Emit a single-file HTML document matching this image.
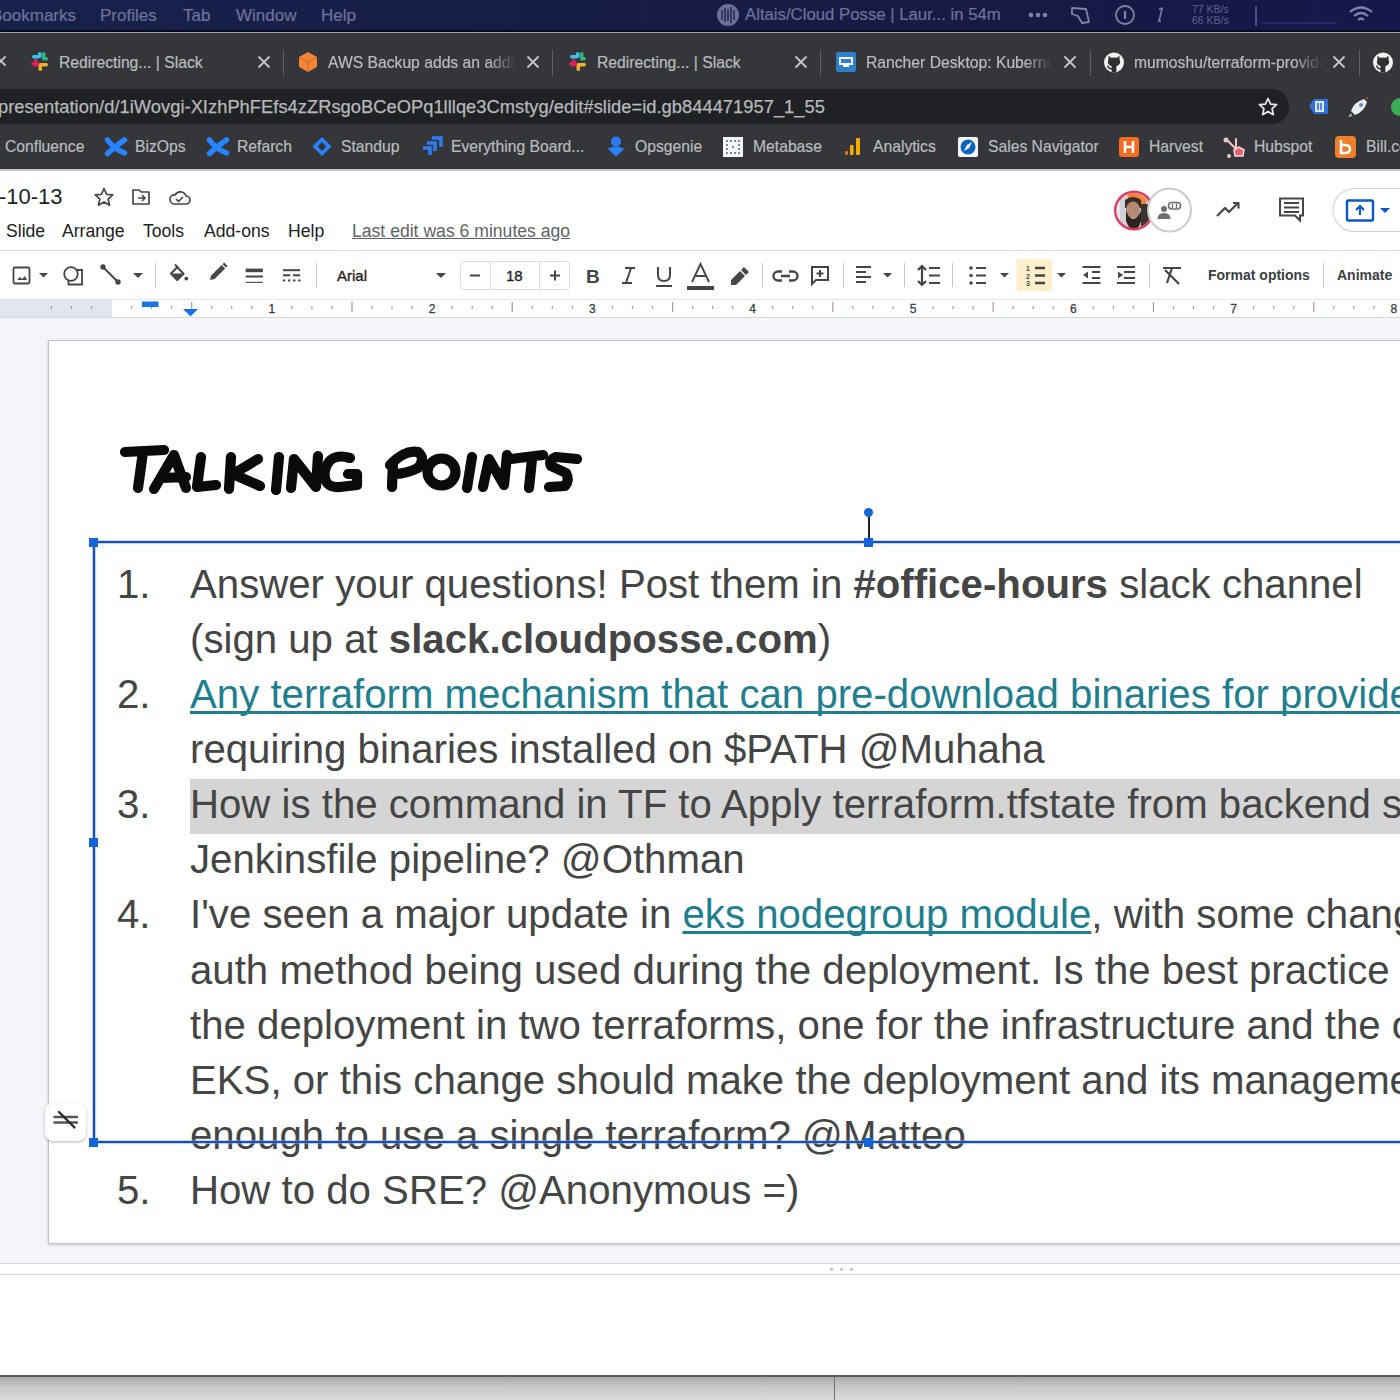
<!DOCTYPE html>
<html><head><meta charset="utf-8">
<style>
*{box-sizing:border-box;margin:0;padding:0}
html,body{width:1400px;height:1400px;overflow:hidden;background:#fff;font-family:"Liberation Sans",sans-serif}
.a{position:absolute}
.t{position:absolute;white-space:nowrap;line-height:1}
svg{position:absolute;overflow:visible}
/* mac menu bar */
#menubar{left:0;top:0;width:1400px;height:31px;background:linear-gradient(90deg,#17224a 0%,#161d45 40%,#181a42 70%,#15184a 100%)}
#menubar .t{color:#6d7399;font-size:17px;top:7px;-webkit-text-stroke:0.2px #6d7399}
/* chrome */
#tabstrip{left:0;top:33px;width:1400px;height:56px;background:#35363a}
#tabstrip .t{color:#c4c6ca;font-size:15.6px;top:55px}
.tsep{position:absolute;top:50px;width:1px;height:26px;background:#5f6063}
#addrrow{left:0;top:88px;width:1400px;height:37px;background:#35363a}
#addr{left:-30px;top:89px;width:1319px;height:35px;background:#202124;border-radius:17px}
#bmbar{left:0;top:125px;width:1400px;height:45px;background:#35363a}
#bmbar .t,.bm{color:#b9bcc0;font-size:15.7px;-webkit-text-stroke:0.2px #b9bcc0}
/* slides header */
#hdrline{left:0;top:250px;width:1400px;height:1px;background:#dadce0}
.menu{color:#202124;font-size:17.6px;top:223px}
/* toolbar */
.sep{position:absolute;top:263px;width:1px;height:24px;background:#c7c7c7}
/* ruler */
#ruler{left:0;top:300px;width:1400px;height:18px;background:#fff;border-bottom:1px solid #d5d8dd}
#canvas{left:0;top:318px;width:1400px;height:945px;background:#f3f5f9}
#slide{left:48px;top:340px;width:1400px;height:904px;background:#fff;border:1px solid #c4c4c4;box-shadow:0 1px 3px rgba(0,0,0,.18)}
.li{position:absolute;left:0;font-size:40.2px;line-height:55px;color:#454545;white-space:nowrap}
.num{position:absolute;left:117px;font-size:40.2px;line-height:55px;color:#454545}
.lk{color:#207f8e;text-decoration:underline;text-decoration-thickness:2.6px;text-underline-offset:3px;text-decoration-skip-ink:none}
</style></head><body>

<div id="menubar" class="a">
  <div class="t" style="left:-9px">Bookmarks</div>
  <div class="t" style="left:100px">Profiles</div>
  <div class="t" style="left:183px">Tab</div>
  <div class="t" style="left:236px">Window</div>
  <div class="t" style="left:321px">Help</div>
  <div class="t" style="left:745px;font-size:16.75px">Altais/Cloud Posse | Laur... in 54m</div>
</div>
<div class="a" style="left:0;top:30px;width:1400px;height:2px;background:#060a1e"></div>
<div class="a" style="left:0;top:32px;width:1400px;height:1px;background:#9d9ea3"></div>

<div id="tabstrip" class="a"></div>
<div id="addrrow" class="a"></div>
<div id="addr" class="a"></div>
<div id="bmbar" class="a"></div>
<div class="a" style="left:0;top:169px;width:1400px;height:2px;background:#c9c9c9"></div>


<!-- menubar icons -->
<svg class="a" style="left:0;top:0" width="1400" height="32">
<g fill="none" stroke="#7d84a8" stroke-width="1.8">
<circle cx="728" cy="15" r="11" fill="#6b7197" stroke="none"/>
<path d="M722,10 v10 M725,8 v14 M728,9 v12 M731,7 v16 M734,10 v10" stroke="#1b2150" stroke-width="1.4"/>
<circle cx="1031" cy="15" r="2.3" fill="#7d84a8" stroke="none"/><circle cx="1038" cy="15" r="2.3" fill="#7d84a8" stroke="none"/><circle cx="1045" cy="15" r="2.3" fill="#7d84a8" stroke="none"/>
<path d="M1072,8 L1086,9 L1089,22 L1082,23 L1078,16 L1072,14 Z" stroke-linejoin="round"/>
<circle cx="1125" cy="15" r="9"/><path d="M1125,11 v8" stroke-width="2.2"/>
<path d="M1162,9 l-3,12 M1159,9 l4,-1 M1158,21 l3,0" stroke-width="1.5"/>
<path d="M1350,12 Q1361,3 1372,12 M1354,16 Q1361,10 1368,16 M1358,20 Q1361,17 1364,20" stroke-width="2.2"/>
</g>
<text x="1192" y="13" font-size="10.5" fill="#5d6388" font-family="Liberation Sans">77 KB/s</text>
<text x="1192" y="24" font-size="10.5" fill="#5d6388" font-family="Liberation Sans">66 KB/s</text>
<path d="M1256,6 v20" stroke="#4a5080" stroke-width="2" fill="none"/>
<path d="M1262,23 h75" stroke="#2c3e8a" stroke-width="1.5" fill="none" opacity=".7"/>
</svg>

<!-- tabs -->
<div class="t bm" style="left:59px;top:55px">Redirecting... | Slack</div>
<div class="t bm" style="left:328px;top:55px;width:188px;overflow:hidden;-webkit-mask-image:linear-gradient(90deg,#000 85%,transparent)">AWS Backup adds an additional</div>
<div class="t bm" style="left:597px;top:55px">Redirecting... | Slack</div>
<div class="t bm" style="left:866px;top:55px;width:186px;overflow:hidden;-webkit-mask-image:linear-gradient(90deg,#000 85%,transparent)">Rancher Desktop: Kubernetes</div>
<div class="t bm" style="left:1134px;top:55px;width:188px;overflow:hidden;-webkit-mask-image:linear-gradient(90deg,#000 85%,transparent)">mumoshu/terraform-provider</div>
<div class="tsep" style="left:283px"></div><div class="tsep" style="left:552px"></div><div class="tsep" style="left:820px"></div><div class="tsep" style="left:1090px"></div><div class="tsep" style="left:1359px"></div>
<svg class="a" style="left:0;top:0" width="1400" height="170">
<g stroke="#c4c6ca" stroke-width="1.8" stroke-linecap="round">
<path d="M259,57 l10,10 M269,57 l-10,10"/>
<path d="M528,57 l10,10 M538,57 l-10,10"/>
<path d="M796,57 l10,10 M806,57 l-10,10"/>
<path d="M1065,57 l10,10 M1075,57 l-10,10"/>
<path d="M1334,57 l10,10 M1344,57 l-10,10"/>
<path d="M-3,57 l8,8 M5,57 l-8,8"/>
</g>
<!-- slack icons -->
<g id="slk">
<rect x="32" y="55" width="8" height="3.5" rx="1.7" fill="#36c5f0"/><rect x="38" y="52" width="3.5" height="6" rx="1.7" fill="#36c5f0"/>
<rect x="42" y="52" width="3.5" height="8" rx="1.7" fill="#2eb67d"/><rect x="42" y="57" width="6" height="3.5" rx="1.7" fill="#2eb67d"/>
<rect x="40" y="63" width="8" height="3.5" rx="1.7" fill="#ecb22e"/><rect x="38.5" y="63" width="3.5" height="8" rx="1.7" fill="#ecb22e"/>
<rect x="34" y="59" width="3.5" height="8" rx="1.7" fill="#e01e5a"/><rect x="31" y="62" width="8" height="3.5" rx="1.7" fill="#e01e5a"/>
</g>
<use href="#slk" x="538"/>
<!-- aws cube -->
<path d="M308,52 l9,5 v10 l-9,5 l-9,-5 v-10 z" fill="#f58536"/><path d="M299,57 l9,5 l9,-5 M308,62 v10" stroke="#c8621e" stroke-width="1" fill="none"/>
<!-- rancher -->
<rect x="836" y="52" width="20" height="20" rx="2" fill="#2f7fcf"/><path d="M840,58 h12 v6 h-12 z M843,66 h6" stroke="#fff" stroke-width="1.8" fill="none"/>
<!-- github -->
<g id="gh"><defs><clipPath id="ghc"><circle cx="1114" cy="62.5" r="10"/></clipPath></defs><circle cx="1114" cy="62.5" r="10" fill="#f4f4f6"/><g clip-path="url(#ghc)" fill="#2e2f33"><ellipse cx="1114" cy="62" rx="6.2" ry="4.6"/><path d="M1108.3,60 l0.3,-4.2 3,2.4 z M1119.7,60 l-0.3,-4.2 -3,2.4 z"/><rect x="1111.6" y="64" width="4.8" height="12"/><path d="M1107.5,65.5 q1,3.5 4.5,3.5" fill="none" stroke="#2e2f33" stroke-width="1.3"/></g></g>
<use href="#gh" x="269"/>
<!-- address star & extensions -->
<path d="M1268,98.5 l2.6,5.6 6,0.6 -4.5,4 1.3,6 -5.4,-3.1 -5.4,3.1 1.3,-6 -4.5,-4 6,-0.6 z" fill="none" stroke="#e8eaed" stroke-width="1.7" stroke-linejoin="round"/>
<path d="M1309,106 l5,-7 h14 v15 h-14 z" fill="#2f6fd6"/><rect x="1315" y="101" width="9" height="11" fill="#dbe8ff"/><path d="M1318,103 v7 M1321,103 v7" stroke="#2f6fd6" stroke-width="1.6"/>
<path d="M1364,99 q-10,3 -13,12 l4,4 q9,-3 12,-13 z" fill="#eceff1"/><circle cx="1361" cy="105" r="2" fill="#5b8bd0"/><path d="M1351,113 l-3,4 4,-1 z" fill="#c8c090"/><path d="M1366,98 l2,-1 -1,3 z" fill="#e55"/>
<circle cx="1400" cy="107" r="9" fill="#3cae5a"/>
</svg>
<div class="t" style="left:-2px;top:98px;font-size:18.3px;letter-spacing:0.04px;color:#b6b8bc;-webkit-text-stroke:0.25px #b6b8bc">presentation/d/1iWovgi-XIzhPhFEfs4zZRsgoBCeOPq1lllqe3Cmstyg/edit#slide=id.gb844471957_1_55</div>


<!-- bookmarks -->
<div class="t bm" style="left:5px;top:139px">Confluence</div>
<div class="t bm" style="left:135px;top:139px">BizOps</div>
<div class="t bm" style="left:237px;top:139px">Refarch</div>
<div class="t bm" style="left:341px;top:139px">Standup</div>
<div class="t bm" style="left:451px;top:139px">Everything Board...</div>
<div class="t bm" style="left:635px;top:139px">Opsgenie</div>
<div class="t bm" style="left:753px;top:139px">Metabase</div>
<div class="t bm" style="left:873px;top:139px">Analytics</div>
<div class="t bm" style="left:988px;top:139px">Sales Navigator</div>
<div class="t bm" style="left:1149px;top:139px">Harvest</div>
<div class="t bm" style="left:1254px;top:139px">Hubspot</div>
<div class="t bm" style="left:1366px;top:139px">Bill.com</div>
<svg class="a" style="left:0;top:0" width="1400" height="170">
<g id="conf" fill="none" stroke="#2684ff" stroke-width="5.5" stroke-linecap="round"><path d="M107.5,140 Q114,149 124.5,153"/><path d="M107.5,153.5 Q117,145 124.5,140"/></g>
<use href="#conf" x="102"/>
<path d="M322,137 l9.5,9.5 -9.5,9.5 -9.5,-9.5 z" fill="#2684ff"/><path d="M322,142 l4.5,4.5 -4.5,4.5 -4.5,-4.5 z" fill="#35363a"/>
<path d="M423,148 h7 v7 M427,143 h8 v8 M432,138 h9 v9" fill="none" stroke="#2f7cf0" stroke-width="3.6" stroke-linejoin="miter"/>
<circle cx="616" cy="141.5" r="5" fill="#2c7cf6"/><path d="M607.5,148.5 L616,146 L624.5,148.5 L616,156.5 z" fill="#2684ff"/>
<rect x="723" y="137" width="20" height="20" fill="#f4f6fb"/>
<g fill="#55657a"><circle cx="727" cy="141" r="1"/><circle cx="731" cy="141" r="1"/><circle cx="735" cy="141" r="1"/><circle cx="739" cy="141" r="1"/><circle cx="727" cy="145" r="1"/><circle cx="733" cy="147" r="1"/><circle cx="739" cy="145" r="1"/><circle cx="727" cy="149" r="1"/><circle cx="739" cy="149" r="1"/><circle cx="727" cy="153" r="1"/><circle cx="731" cy="153" r="1"/><circle cx="735" cy="153" r="1"/><circle cx="739" cy="153" r="1"/></g>
<rect x="845" y="151" width="3" height="4" rx="1" fill="#e8710a"/><rect x="850" y="145" width="3.5" height="10" rx="1" fill="#f9ab00"/><rect x="856" y="138" width="4" height="17" rx="1" fill="#f9ab00"/>
<rect x="958" y="137" width="20" height="20" rx="2" fill="#f3f6fa"/><circle cx="968" cy="147" r="7.5" fill="#0a66c2"/><path d="M972,142 l-3,6 -5,3 3,-6 z" fill="#fff"/>
<rect x="1119" y="137" width="20" height="20" rx="3" fill="#f36c21"/><path d="M1125,141 v12 M1133,141 v12 M1125,147 h8" stroke="#fff" stroke-width="2.5"/>
<path d="M1227,140 l10,10 M1236,139 v8" stroke="#f7c2c2" stroke-width="2" stroke-linecap="round"/><circle cx="1226" cy="140" r="2.5" fill="#f6c6c6"/><circle cx="1229" cy="156" r="2" fill="#f6c6c6"/><path d="M1234,150 l5,-3 5,3 -1,6 h-8 z" fill="#e8606a" stroke="#fbdcdc" stroke-width="1.5"/>
<rect x="1335" y="136" width="21" height="22" rx="4" fill="#ef7f2a"/><path d="M1341,140 v13 h4 q5,0 5,-4 q0,-4 -5,-4 h-4" stroke="#fff" stroke-width="2.6" fill="none"/>

</svg>


<!-- doc header -->
<div class="t" style="left:-1px;top:186px;font-size:22px;color:#1f1f1f">-10-13</div>
<div class="t menu" style="left:6px">Slide</div>
<div class="t menu" style="left:62px">Arrange</div>
<div class="t menu" style="left:143px">Tools</div>
<div class="t menu" style="left:204px">Add-ons</div>
<div class="t menu" style="left:288px">Help</div>
<div class="t menu" style="left:352px;color:#5f6368;text-decoration:underline;font-size:17.6px">Last edit was 6 minutes ago</div>
<svg class="a" style="left:0;top:0" width="1400" height="320">
<g fill="none" stroke="#444746" stroke-width="1.7" stroke-linejoin="round">
<path d="M104,188.5 l2.6,5.8 6.2,0.6 -4.7,4.2 1.4,6.1 -5.5,-3.2 -5.5,3.2 1.4,-6.1 -4.7,-4.2 6.2,-0.6 z"/>
<path d="M133,190 h6 l2,2 h8 v12 h-16 z M138,198 h7 M142,195 l3,3 -3,3"/>
<path d="M174,204 h12 a4,4 0 0 0 0,-8 a6,6 0 0 0 -11,-1 a4.5,4.5 0 0 0 -1,9 z M176,199 l2.5,2.5 4.5,-4.5"/>
</g>
<!-- right header icons -->
<defs><clipPath id="av"><circle cx="1134" cy="210.5" r="17.5"/></clipPath></defs>
<circle cx="1134" cy="210.5" r="20" fill="#e23a64"/>
<g clip-path="url(#av)">
<rect x="1110" y="190" width="50" height="42" fill="#cfd2d4"/>
<rect x="1110" y="190" width="10" height="42" fill="#e8eaec"/>
<path d="M1127,194 q12,-4 20,6 l-2,8 q-6,-8 -16,-8 z" fill="#f0883a"/>
<path d="M1125,200 q8,-6 16,0 v8 h-16 z" fill="#3a2c26"/>
<ellipse cx="1133" cy="210" rx="7" ry="8.5" fill="#b48a72"/>
<path d="M1126,211 q7,16 15,0 v10 q-2,8 -7,10 q-5,-2 -8,-10 z" fill="#2c2320"/>
<rect x="1141" y="204" width="12" height="28" fill="#3b3330"/>
<path d="M1118,227 q14,8 30,-2 v10 h-30 z" fill="#e26a2c"/>
</g>
<circle cx="1169.5" cy="210" r="21.5" fill="#fff" stroke="#cbcbcb" stroke-width="2"/>
<circle cx="1164" cy="209" r="3" fill="#6f6f6f"/><path d="M1157.5,219 q0,-6 6.5,-6 q6.5,0 6.5,6 z" fill="#6f6f6f"/>
<rect x="1168.5" y="202.5" width="12" height="6.5" rx="3.2" fill="#fff" stroke="#6f6f6f" stroke-width="1.6"/><path d="M1172.5,203.5 v4.5 M1176.5,203.5 v4.5" stroke="#6f6f6f" stroke-width="1.3"/>
<path d="M1217,216 l8,-8 4,4 9,-9 M1233,203 h5.5 v5.5" fill="none" stroke="#444746" stroke-width="2.2" stroke-linejoin="round"/>
<path d="M1280,198.5 h23 v17 h-3 v5 l-5,-5 h-15 z M1284,203 h15 M1284,207.5 h15 M1284,212 h15" fill="none" stroke="#444746" stroke-width="2"/>
<rect x="1333" y="188.5" width="90" height="43" rx="21.5" fill="#fff" stroke="#d6d6d6" stroke-width="1.2"/>
<rect x="1347" y="200.5" width="26" height="20" rx="1.5" fill="none" stroke="#0b57d0" stroke-width="2.4"/>
<path d="M1360,215 v-8 M1356,210 l4,-4 4,4" stroke="#0b57d0" stroke-width="2.2" fill="none"/>
<path d="M1380,208 h10 l-5,5 z" fill="#0b57d0"/>
</svg>

<!-- toolbar -->
<svg class="a" style="left:0;top:0" width="1400" height="320">
<g fill="none" stroke="#444746" stroke-width="1.8">
<rect x="13.5" y="267.5" width="16" height="16" rx="1.5"/>
<path d="M17,280 l3,-3 2,2 3,-3 2,4 z" fill="#444746" stroke="none"/>
<circle cx="71" cy="274" r="6.8"/><path d="M77,270 h5 v14.5 h-13.5 v-3.5"/>
<path d="M103,267 l15,15" stroke-width="2"/><circle cx="103" cy="267" r="1.8" fill="#444746"/><circle cx="118" cy="282" r="1.8" fill="#444746"/>
<path d="M175,264.5 l3.5,3.5" stroke-width="2"/>
<path d="M171,273.5 L177.2,267.3 L183.6,273.7 L177.2,280 Z" stroke-width="2" stroke-linejoin="round"/>
<path d="M172,273.5 L183,273.5 L177.2,279.5 Z" fill="#444746" stroke="none"/>
<circle cx="186.3" cy="278.6" r="1.9" fill="#444746" stroke="none"/>
<path d="M210,280 l1.2,-4.5 10.5,-10.5 3.4,3.4 -10.5,10.5 z" fill="#444746" stroke="none"/>
<path d="M222.5,264.2 l1.6,-1.6 3.4,3.4 -1.6,1.6 z" fill="#444746" stroke="none"/>
<rect x="245.7" y="268.6" width="17.2" height="3.6" fill="#444746" stroke="none"/>
<rect x="245.7" y="275.5" width="17.2" height="2" fill="#444746" stroke="none"/>
<rect x="245.7" y="281.8" width="17.2" height="1.1" fill="#444746" stroke="none"/>
<rect x="283" y="269.2" width="17" height="2" fill="#444746" stroke="none"/>
<rect x="283" y="274.3" width="7.3" height="2" fill="#444746" stroke="none"/><rect x="293" y="274.3" width="7" height="2" fill="#444746" stroke="none"/>
<circle cx="284" cy="280.4" r="1.2" fill="#444746" stroke="none"/><circle cx="289.1" cy="280.4" r="1.2" fill="#444746" stroke="none"/><circle cx="294.3" cy="280.4" r="1.2" fill="#444746" stroke="none"/><circle cx="299.4" cy="280.4" r="1.2" fill="#444746" stroke="none"/>
</g>
<g fill="#444746">
<path d="M39,273 h9 l-4.5,4.5 z"/><path d="M133,273 h10 l-5,5 z"/><path d="M436,273 h10 l-5,5 z"/>
<path d="M883,273 h9 l-4.5,4.5 z"/><path d="M1000,273 h9 l-4.5,4.5 z"/><path d="M1057,273 h9 l-4.5,4.5 z"/>
</g>
<rect x="460.5" y="261.5" width="109" height="28" rx="3" fill="#fff" stroke="#dadce0"/>
<path d="M490.5,262 v27 M539.5,262 v27" stroke="#dadce0"/>
<path d="M470,275.5 h10" stroke="#444746" stroke-width="2"/><path d="M550,275.5 h10 M555,270.5 v10" stroke="#444746" stroke-width="2"/>
<text x="586" y="283" font-size="19" font-weight="700" fill="#444746" font-family="Liberation Sans">B</text>
<path d="M625,268 h10 M622,283 h10 M631,268 l-5,15" stroke="#444746" stroke-width="2" fill="none"/>
<path d="M658,267 v8 q0,6 6,6 q6,0 6,-6 v-8 M656,286 h16" stroke="#444746" stroke-width="2" fill="none"/>
<path d="M692,282 l8.5,-18 8.5,18 M695,276 h11" stroke="#444746" stroke-width="1.9" fill="none"/><rect x="687" y="286" width="27" height="4" fill="#444746"/>
<path d="M731,280 l9,-9 5,5 -9,9 h-5 z M741,270 l3,-3 5,5 -3,3 z" fill="#444746"/>
<g fill="none" stroke="#444746" stroke-width="2">
<path d="M782,271.5 h-4 a4.5,4.5 0 0 0 0,9 h4 M789,271.5 h4 a4.5,4.5 0 0 1 0,9 h-4 M781,276 h9" stroke-width="2.4"/>
<path d="M812,267 h16 v13 h-12 l-4,4 z M820,270 v7 M816.5,273.5 h7"/>
<path d="M856,267 h15 M856,272 h10 M856,277 h15 M856,282 h10" stroke-width="2.2"/>
<path d="M922,266 v19 M918,270 l4,-4 4,4 M918,281 l4,4 4,-4 M929,268 h11 M929,275.5 h11 M929,283 h11" stroke-width="2.2"/>
<path d="M976,268 h10 M976,275.5 h10 M976,283 h10" stroke-width="2.2"/>
<path d="M1090,267 h10 M1090,283 h10 M1092,272 h8 M1092,278 h8 M1083,267 v0" stroke-width="2"/>
<path d="M1117,267 h18 M1117,283 h18 M1124,272 h11 M1124,278 h11" stroke-width="2"/>
<path d="M1163,268 h18 M1172,268 l-5,15 M1165,270 l14,14" stroke-width="2.2"/>
</g>
<g fill="#444746"><circle cx="971" cy="268" r="1.8"/><circle cx="971" cy="275.5" r="1.8"/><circle cx="971" cy="283" r="1.8"/>
<path d="M1083,275 l5,-3.5 v7 z"/><path d="M1118,271.5 l5,3.5 -5,3.5 z"/></g>
<path d="M1082.5,267 h18 M1082.5,283 h18" stroke="#444746" stroke-width="2"/>
<rect x="1016.5" y="259" width="35.5" height="32" rx="2" fill="#fce8b2" fill-opacity=".7"/>
<path d="M1035,268 h10 M1035,275.5 h10 M1035,283 h10" stroke="#444746" stroke-width="2.4"/>
<text x="1026" y="271" font-size="7" fill="#444746" font-family="Liberation Sans" font-weight="700">1</text>
<text x="1026" y="278.5" font-size="7" fill="#444746" font-family="Liberation Sans" font-weight="700">2</text>
<text x="1026" y="286" font-size="7" fill="#444746" font-family="Liberation Sans" font-weight="700">3</text>
</svg>
<div class="sep" style="left:155px"></div><div class="sep" style="left:316px"></div><div class="sep" style="left:762px"></div><div class="sep" style="left:843px"></div><div class="sep" style="left:904px"></div><div class="sep" style="left:952px"></div><div class="sep" style="left:1149px"></div><div class="sep" style="left:1323px"></div>
<div class="t" style="left:337px;top:268px;font-size:15px;color:#1f1f1f;-webkit-text-stroke:0.35px #1f1f1f">Arial</div>
<div class="t" style="left:506px;top:268px;font-size:15px;color:#1f1f1f;-webkit-text-stroke:0.35px #1f1f1f">18</div>
<div class="t" style="left:1208px;top:268px;font-size:14px;font-weight:700;color:#3c4043">Format options</div>
<div class="t" style="left:1337px;top:268px;font-size:14px;font-weight:700;color:#3c4043">Animate</div>

<div id="hdrline" class="a"></div>
<div id="ruler" class="a"></div>
<div class="a" style="left:0;top:300px;width:112px;height:17px;background:#e3e6ec"></div>
<div id="canvas" class="a"></div>
<svg class="a" style="left:0;top:0" width="1400" height="320">
<rect x="0" y="299" width="1400" height="1" fill="#e6e6e6"/>


<rect x="50.8" y="306" width="1.2" height="3" fill="#9aa0a6"/>
<rect x="70.8" y="306" width="1.2" height="3" fill="#9aa0a6"/>
<rect x="90.9" y="306" width="1.2" height="3" fill="#9aa0a6"/>
<rect x="130.9" y="306" width="1.2" height="3" fill="#9aa0a6"/>
<rect x="151.0" y="306" width="1.2" height="3" fill="#9aa0a6"/>
<rect x="171.0" y="306" width="1.2" height="3" fill="#9aa0a6"/>
<rect x="191.1" y="302" width="1.2" height="10" fill="#9aa0a6"/>
<rect x="211.1" y="306" width="1.2" height="3" fill="#9aa0a6"/>
<rect x="231.1" y="306" width="1.2" height="3" fill="#9aa0a6"/>
<rect x="251.2" y="306" width="1.2" height="3" fill="#9aa0a6"/>
<rect x="291.2" y="306" width="1.2" height="3" fill="#9aa0a6"/>
<rect x="311.3" y="306" width="1.2" height="3" fill="#9aa0a6"/>
<rect x="331.3" y="306" width="1.2" height="3" fill="#9aa0a6"/>
<rect x="351.4" y="302" width="1.2" height="10" fill="#9aa0a6"/>
<rect x="371.4" y="306" width="1.2" height="3" fill="#9aa0a6"/>
<rect x="391.4" y="306" width="1.2" height="3" fill="#9aa0a6"/>
<rect x="411.5" y="306" width="1.2" height="3" fill="#9aa0a6"/>
<rect x="451.5" y="306" width="1.2" height="3" fill="#9aa0a6"/>
<rect x="471.6" y="306" width="1.2" height="3" fill="#9aa0a6"/>
<rect x="491.6" y="306" width="1.2" height="3" fill="#9aa0a6"/>
<rect x="511.6" y="302" width="1.2" height="10" fill="#9aa0a6"/>
<rect x="531.7" y="306" width="1.2" height="3" fill="#9aa0a6"/>
<rect x="551.7" y="306" width="1.2" height="3" fill="#9aa0a6"/>
<rect x="571.8" y="306" width="1.2" height="3" fill="#9aa0a6"/>
<rect x="611.8" y="306" width="1.2" height="3" fill="#9aa0a6"/>
<rect x="631.9" y="306" width="1.2" height="3" fill="#9aa0a6"/>
<rect x="651.9" y="306" width="1.2" height="3" fill="#9aa0a6"/>
<rect x="672.0" y="302" width="1.2" height="10" fill="#9aa0a6"/>
<rect x="692.0" y="306" width="1.2" height="3" fill="#9aa0a6"/>
<rect x="712.0" y="306" width="1.2" height="3" fill="#9aa0a6"/>
<rect x="732.1" y="306" width="1.2" height="3" fill="#9aa0a6"/>
<rect x="772.1" y="306" width="1.2" height="3" fill="#9aa0a6"/>
<rect x="792.2" y="306" width="1.2" height="3" fill="#9aa0a6"/>
<rect x="812.2" y="306" width="1.2" height="3" fill="#9aa0a6"/>
<rect x="832.2" y="302" width="1.2" height="10" fill="#9aa0a6"/>
<rect x="852.3" y="306" width="1.2" height="3" fill="#9aa0a6"/>
<rect x="872.3" y="306" width="1.2" height="3" fill="#9aa0a6"/>
<rect x="892.4" y="306" width="1.2" height="3" fill="#9aa0a6"/>
<rect x="932.4" y="306" width="1.2" height="3" fill="#9aa0a6"/>
<rect x="952.5" y="306" width="1.2" height="3" fill="#9aa0a6"/>
<rect x="972.5" y="306" width="1.2" height="3" fill="#9aa0a6"/>
<rect x="992.6" y="302" width="1.2" height="10" fill="#9aa0a6"/>
<rect x="1012.6" y="306" width="1.2" height="3" fill="#9aa0a6"/>
<rect x="1032.6" y="306" width="1.2" height="3" fill="#9aa0a6"/>
<rect x="1052.7" y="306" width="1.2" height="3" fill="#9aa0a6"/>
<rect x="1092.7" y="306" width="1.2" height="3" fill="#9aa0a6"/>
<rect x="1112.8" y="306" width="1.2" height="3" fill="#9aa0a6"/>
<rect x="1132.8" y="306" width="1.2" height="3" fill="#9aa0a6"/>
<rect x="1152.9" y="302" width="1.2" height="10" fill="#9aa0a6"/>
<rect x="1172.9" y="306" width="1.2" height="3" fill="#9aa0a6"/>
<rect x="1192.9" y="306" width="1.2" height="3" fill="#9aa0a6"/>
<rect x="1213.0" y="306" width="1.2" height="3" fill="#9aa0a6"/>
<rect x="1253.0" y="306" width="1.2" height="3" fill="#9aa0a6"/>
<rect x="1273.1" y="306" width="1.2" height="3" fill="#9aa0a6"/>
<rect x="1293.1" y="306" width="1.2" height="3" fill="#9aa0a6"/>
<rect x="1313.2" y="302" width="1.2" height="10" fill="#9aa0a6"/>
<rect x="1333.2" y="306" width="1.2" height="3" fill="#9aa0a6"/>
<rect x="1353.2" y="306" width="1.2" height="3" fill="#9aa0a6"/>
<rect x="1373.3" y="306" width="1.2" height="3" fill="#9aa0a6"/>
<text x="271.8" y="313" font-size="12" text-anchor="middle" fill="#3c4043" stroke="#3c4043" stroke-width="0.3" font-family="Liberation Sans">1</text>
<text x="432.1" y="313" font-size="12" text-anchor="middle" fill="#3c4043" stroke="#3c4043" stroke-width="0.3" font-family="Liberation Sans">2</text>
<text x="592.4" y="313" font-size="12" text-anchor="middle" fill="#3c4043" stroke="#3c4043" stroke-width="0.3" font-family="Liberation Sans">3</text>
<text x="752.7" y="313" font-size="12" text-anchor="middle" fill="#3c4043" stroke="#3c4043" stroke-width="0.3" font-family="Liberation Sans">4</text>
<text x="913.0" y="313" font-size="12" text-anchor="middle" fill="#3c4043" stroke="#3c4043" stroke-width="0.3" font-family="Liberation Sans">5</text>
<text x="1073.3" y="313" font-size="12" text-anchor="middle" fill="#3c4043" stroke="#3c4043" stroke-width="0.3" font-family="Liberation Sans">6</text>
<text x="1233.6" y="313" font-size="12" text-anchor="middle" fill="#3c4043" stroke="#3c4043" stroke-width="0.3" font-family="Liberation Sans">7</text>
<text x="1393.9" y="313" font-size="12" text-anchor="middle" fill="#3c4043" stroke="#3c4043" stroke-width="0.3" font-family="Liberation Sans">8</text>
<rect x="142" y="301.5" width="16.5" height="5.5" fill="#1a73e8"/>
<path d="M183,309 h15 l-7.5,7.5 z" fill="#1a73e8"/>
</svg>
<div id="slide" class="a"></div>


<!-- slide content -->
<svg class="a" style="left:0;top:0" width="1400" height="1400" viewBox="0 0 1400 1400">
<g fill="none" stroke="#0a0a0a" stroke-width="10.2" stroke-linecap="round" stroke-linejoin="round">
<path d="M125,452 L164,450 M143,452 L138,488"/>
<path d="M154,489 L174,455 L186,488 M162,478 L186,477"/>
<path d="M201,457 L197,487 L216,485"/>
<path d="M231,457 L229,489 M258,459 L233,474 L260,486"/>
<path d="M279,457 L276,490"/>
<path d="M291,488 L294,459 L316,487 L318,456"/>
<path d="M350,458 Q330,452 325,470 Q322,488 340,487 L357,485 L357,474 L348,474"/>
<path d="M393,462 L392,487 M390,465 Q405,449 418,452 Q426,458 418,468 Q406,474 394,474"/>
<ellipse cx="441.5" cy="472" rx="14" ry="13.5"/>
<path d="M472,457 L467,488"/>
<path d="M483,487 L489,459 L504,485 L507,455"/>
<path d="M511,459 L543,455 M532,459 L529,488"/>
<path d="M577,459 L556,457 Q548,460 551,466 L566,473 Q570,480 565,486 L549,487"/>
</g>
</svg>

<div class="a" style="left:190px;top:779px;width:1210px;height:55px;background:#d5d5d5"></div>

<div class="num" style="top:557px">1.</div>
<div class="li" style="left:190px;top:557px">Answer your questions! Post them in <b>#office-hours</b> slack channel</div>
<div class="li" style="left:190px;top:612px">(sign up at <b>slack.cloudposse.com</b>)</div>
<div class="num" style="top:667px">2.</div>
<div class="li" style="left:190px;top:667px"><span class="lk">Any terraform mechanism that can pre-download binaries for providers</span></div>
<div class="li" style="left:190px;top:722px">requiring binaries installed on $PATH @Muhaha</div>
<div class="num" style="top:777px">3.</div>
<div class="li" style="left:190px;top:777px">How is the command in TF to Apply terraform.tfstate from backend stored</div>
<div class="li" style="left:190px;top:832px">Jenkinsfile pipeline? @Othman</div>
<div class="num" style="top:887px">4.</div>
<div class="li" style="left:190px;top:887px">I've seen a major update in <span class="lk">eks nodegroup module</span>, with some changes</div>
<div class="li" style="left:190px;top:943px">auth method being used during the deployment. Is the best practice to</div>
<div class="li" style="left:190px;top:998px">the deployment in two terraforms, one for the infrastructure and the other</div>
<div class="li" style="left:190px;top:1053px">EKS, or this change should make the deployment and its management</div>
<div class="li" style="left:190px;top:1108px">enough to use a single terraform? @Matteo</div>
<div class="num" style="top:1163px">5.</div>
<div class="li" style="left:190px;top:1163px">How to do SRE? @Anonymous =)</div>

<!-- selection -->
<div class="a" style="left:93px;top:541px;width:1307px;height:2px;background:#1c4fa8;box-shadow:0 0 1px 1px rgba(120,170,255,.55)"></div>
<div class="a" style="left:93px;top:541px;width:2px;height:602px;background:#1c4fa8;box-shadow:0 0 1px 1px rgba(120,170,255,.55)"></div>
<div class="a" style="left:93px;top:1141px;width:1307px;height:2px;background:#1c4fa8;box-shadow:0 0 1px 1px rgba(120,170,255,.55)"></div>
<div class="a" style="left:89px;top:538px;width:9px;height:9px;background:#1565d8"></div>
<div class="a" style="left:864px;top:538px;width:9px;height:9px;background:#1565d8"></div>
<div class="a" style="left:89px;top:838px;width:9px;height:9px;background:#1565d8"></div>
<div class="a" style="left:89px;top:1138px;width:9px;height:9px;background:#1565d8"></div>
<div class="a" style="left:864px;top:1138px;width:9px;height:9px;background:#1565d8"></div>
<div class="a" style="left:868px;top:515px;width:1.5px;height:23px;background:#222"></div>
<div class="a" style="left:864px;top:507.5px;width:9px;height:9px;border-radius:50%;background:#1565d8"></div>

<div class="a" style="left:45px;top:1103px;width:41px;height:38px;border-radius:8px;background:#fff;box-shadow:0 1px 3px rgba(0,0,0,.3)"></div>
<svg class="a" style="left:0;top:0" width="1400" height="1400">
<g stroke="#2a2a2a" stroke-width="2.4" stroke-linecap="round">
<path d="M54.5,1117 L77,1117 M54.5,1122.5 L77,1122.5" stroke="#555"/>
<path d="M59,1112 L74.5,1127.5"/>
</g>
</svg>

<!-- notes -->
<div class="a" style="left:0;top:1263px;width:1400px;height:1px;background:#d6d6d6"></div>
<div class="a" style="left:0;top:1264px;width:1400px;height:10px;background:#fff"></div>
<div class="a" style="left:0;top:1274px;width:1400px;height:1px;background:#d6d6d6"></div>
<svg class="a" style="left:0;top:0" width="1400" height="1400"><g fill="#c4c4c4"><circle cx="831.5" cy="1269.3" r="1.6"/><circle cx="841.5" cy="1269.3" r="1.6"/><circle cx="851.5" cy="1269.3" r="1.6"/></g></svg>
<div class="a" style="left:0;top:1275px;width:1400px;height:100px;background:#fff"></div>
<div class="a" style="left:0;top:1375px;width:1400px;height:2px;background:#5a5a5a"></div>
<div class="a" style="left:0;top:1377px;width:1400px;height:23px;background:linear-gradient(#a9a9a9,#c6c6c6 40%,#dadada)"></div>
<div class="a" style="left:834px;top:1377px;width:1px;height:23px;background:#707070"></div>

</body></html>
